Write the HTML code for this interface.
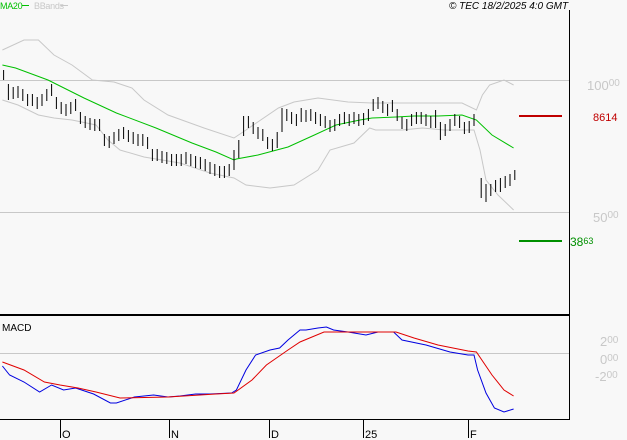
<!DOCTYPE html>
<html><head><style>
html,body{margin:0;padding:0;background:#f8f8f8;}
svg{display:block;}
text{font-family:"Liberation Sans",sans-serif;}
</style></head><body>
<svg width="627" height="440" viewBox="0 0 627 440" xmlns="http://www.w3.org/2000/svg">
<rect width="627" height="440" fill="#f8f8f8"/>
<text x="0" y="9" font-size="9" letter-spacing="-0.3" fill="#00c000">MA20</text>
<line x1="22" y1="5.5" x2="29" y2="5.5" stroke="#00c000" stroke-width="1"/>
<text x="34" y="9" font-size="9" letter-spacing="-0.3" fill="#c8c8c8">BBands</text>
<line x1="61" y1="5.5" x2="68" y2="5.5" stroke="#c8c8c8"/>
<text x="449" y="9" font-size="10" font-style="italic" fill="#000">© TEC 18/2/2025 4:0 GMT</text>
<line x1="0" y1="80.5" x2="569" y2="80.5" stroke="#c8c8c8"/>
<line x1="0" y1="212.5" x2="569" y2="212.5" stroke="#c8c8c8"/>
<line x1="0" y1="353.5" x2="569" y2="353.5" stroke="#c8c8c8"/>
<line x1="569.5" y1="10" x2="569.5" y2="420" stroke="#000"/>
<line x1="0" y1="315" x2="569" y2="315" stroke="#000" stroke-width="2"/>
<line x1="0" y1="419.5" x2="569" y2="419.5" stroke="#000"/>
<g stroke="#000"><line x1="60.5" y1="419" x2="60.5" y2="438"/><line x1="169.5" y1="419" x2="169.5" y2="438"/><line x1="269.5" y1="419" x2="269.5" y2="438"/><line x1="363.5" y1="419" x2="363.5" y2="438"/><line x1="468.5" y1="419" x2="468.5" y2="438"/></g>
<g font-size="11" fill="#000"><text x="62" y="438">O</text><text x="171" y="438">N</text><text x="271" y="438">D</text><text x="365" y="438">25</text><text x="470" y="438">F</text></g>
<g fill="#c8c8c8" font-size="13"><text x="587" y="90">100<tspan font-size="10" dy="-4">00</tspan></text><text x="593" y="222">50<tspan font-size="10" dy="-4">00</tspan></text>
<text x="600" y="346">2<tspan font-size="10" dy="-3">00</tspan></text><text x="600" y="364">0<tspan font-size="10" dy="-3">00</tspan></text><text x="595" y="381">-2<tspan font-size="10" dy="-3">00</tspan></text></g>
<line x1="519" y1="116" x2="562" y2="116" stroke="#c00000" stroke-width="2"/>
<text x="593" y="121" font-size="11" fill="#c00000">8614</text>
<line x1="519" y1="241" x2="562" y2="241" stroke="#009000" stroke-width="2"/>
<text x="570" y="246" font-size="12" fill="#009000">38<tspan font-size="9" dy="-2">63</tspan></text>
<text x="2" y="331" font-size="10" fill="#000">MACD</text>
<g transform="scale(1.2,1)" fill="none">
<polyline vector-effect="non-scaling-stroke" stroke="#c8c8c8" points="2,50 20,40 32,40 45,55 60,65 77,80 95,82 110,88 120,100 140,115 170,128 195,138 205,130 232,108 245,102 265,98 290,102 310,103 330,103 352,103 385,103 397,110 402,95 408,85 420,80 428,85"/>
<polyline vector-effect="non-scaling-stroke" stroke="#c8c8c8" points="2,100 15,105 32,115 45,118 60,120 80,125 90,140 100,150 120,157 150,163 175,173 195,178 205,185 225,188 245,185 265,170 275,150 295,143 308,128 313,130 335,130 352,128 370,130 395,130 400,150 405,180 415,195 428,210"/>
<polyline vector-effect="non-scaling-stroke" stroke="#00c000" points="2,65 13,68 40,80 70,98 97,113 130,128 160,143 180,152 195,160 197,159 215,155 240,147 262,135 280,125 300,120 310,118 330,117 345,116 365,116 385,115 397,120 410,135 428,148"/>
<path vector-effect="non-scaling-stroke" stroke="#000" d="M3 70v10M7 84v16M11 87v12M15 86v12M19 89v12M23 94v12M27 94v12M31 97v12M35 94v12M39 89v12M43 84v12M47 97v12M51 102v12M55 104v12M59 102v12M63 99v12M67 112v12M71 116v12M75 118v12M79 119v12M83 119v12M87 134v12M91 136v12M95 132v12M99 129v12M103 127v12M107 130v12M111 132v12M115 134v12M119 134v12M123 137v12M127 149v12M131 149v12M135 151v12M139 152v12M143 154v12M147 154v12M151 154v12M155 152v12M159 154v12M163 156v12M167 157v12M171 159v12M175 162v12M179 164v12M183 166v12M187 166v12M191 164v12M195 150v20M199 140v18M203 116v20M207 116v12M211 122v12M215 127v12M219 129v12M223 137v12M227 139v12M231 132v16M235 108v24M239 109v12M243 112v12M247 114v12M251 108v14M255 110v12M259 109v12M263 112v12M267 114v12M271 116v12M275 120v12M279 119v12M283 114v12M287 112v12M291 114v12M295 112v12M299 114v12M303 113v12M307 109v12M311 99v12M315 97v12M319 101v12M323 104v12M327 100v12M331 109v12M335 117v12M339 119v12M343 114v12M347 112v12M351 112v12M355 114v12M359 116v12M363 110v18M367 122v18M371 124v12M375 119v12M379 114v12M383 116v12M387 122v12M391 121v12M395 114v12M401 178v20M405 184v18M409 184v12M413 180v12M417 178v14M421 176v12M425 174v12M429 170v10"/>
<polyline vector-effect="non-scaling-stroke" stroke="#0000e0" points="2,366 8,375 20,382 33,392 43,385 53,390 63,388 78,394 92,403 97,403 112,397 128,395 140,397 150,396 163,394 175,394 193,393 197,390 205,370 213,355 225,350 233,348 240,340 250,330 255,330 265,328 272,327 278,330 290,332 305,335 315,332 328,332 335,340 355,345 375,352 390,355 395,355 398,370 405,393 412,408 420,412 428,409"/>
<polyline vector-effect="non-scaling-stroke" stroke="#e00000" points="2,362 20,370 37,382 50,385 65,388 80,392 100,398 140,397 180,394 195,393 210,380 222,365 240,350 250,342 270,332 300,332 330,332 345,338 365,345 390,351 397,352 410,375 420,390 428,396"/>
</g>
</svg>
</body></html>
